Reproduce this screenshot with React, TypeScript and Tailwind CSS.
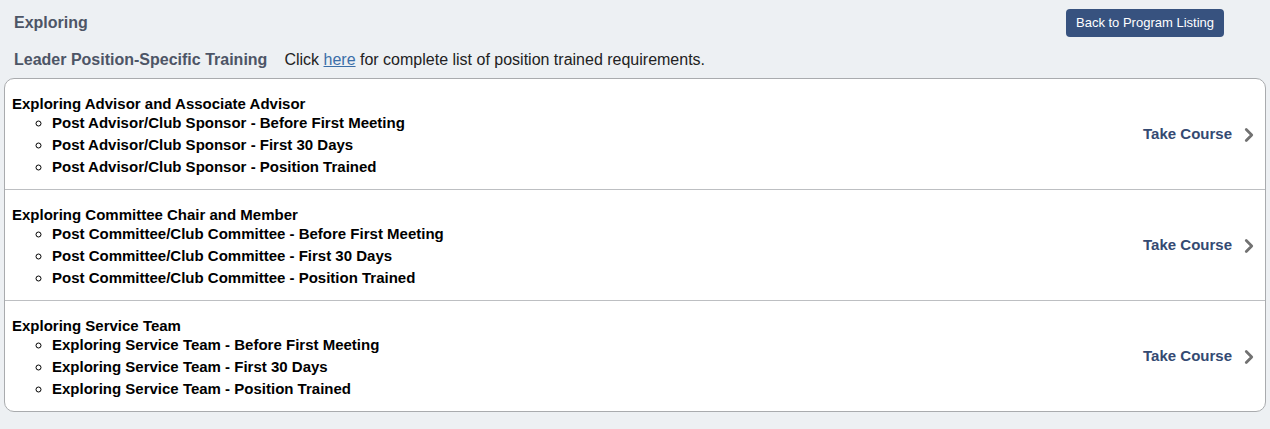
import { ChevronRight } from "lucide-react";

const programs = [
  {
    title: "Exploring Advisor and Associate Advisor",
    courses: [
      "Post Advisor/Club Sponsor - Before First Meeting",
      "Post Advisor/Club Sponsor - First 30 Days",
      "Post Advisor/Club Sponsor - Position Trained",
    ],
  },
  {
    title: "Exploring Committee Chair and Member",
    courses: [
      "Post Committee/Club Committee - Before First Meeting",
      "Post Committee/Club Committee - First 30 Days",
      "Post Committee/Club Committee - Position Trained",
    ],
  },
  {
    title: "Exploring Service Team",
    courses: [
      "Exploring Service Team - Before First Meeting",
      "Exploring Service Team - First 30 Days",
      "Exploring Service Team - Position Trained",
    ],
  },
];

export default function App() {
  return (
    <div className="min-h-screen bg-[#edf0f3] px-[4px] pt-[9px] pb-4 font-['Liberation_Sans',Arial,sans-serif]">
      {/* Header */}
      <div className="flex items-start justify-between pl-[10px] pr-[42px]">
        <h1 className="pt-[2px] text-[16px] font-bold text-[#4d5566]">Exploring</h1>
        <button className="h-[28px] rounded-[4px] bg-[#37527f] px-[10px] text-[13px] text-white">
          Back to Program Listing
        </button>
      </div>

      <div className="mt-[11px] flex items-center pl-[10px]">
        <h2 className="text-[16px] font-bold text-[#4d5566]">Leader Position-Specific Training</h2>
        <p className="ml-[17px] text-[16px] text-[#222]">
          Click{" "}
          <a href="#" className="text-[#3b6ea8] underline">
            here
          </a>{" "}
          for complete list of position trained requirements.
        </p>
      </div>

      {/* Program list */}
      <div className="mt-[6px] overflow-hidden rounded-[10px] border border-[#a9abae] bg-white">
        {programs.map((p, i) => (
          <div
            key={p.title}
            className={`flex items-center justify-between pl-[7px] pr-[5px] ${
              i < programs.length - 1 ? "h-[111px] border-b border-[#bdbfc2]" : "h-[110px]"
            }`}
          >
            <div className="pt-[4px] text-[15px] font-bold text-black">
              <div className="leading-[18px]">{p.title}</div>
              <ul className="-mt-[1px] list-[circle] pl-[40px]">
                {p.courses.map((c) => (
                  <li key={c} className="leading-[22px]">
                    {c}
                  </li>
                ))}
              </ul>
            </div>
            <a href="#" className="flex items-center pt-[1px] text-[15px] font-bold text-[#344a72]">
              Take Course
              <ChevronRight className="ml-[6px] text-[#727272]" size={22} strokeWidth={3} />
            </a>
          </div>
        ))}
      </div>
    </div>
  );
}
